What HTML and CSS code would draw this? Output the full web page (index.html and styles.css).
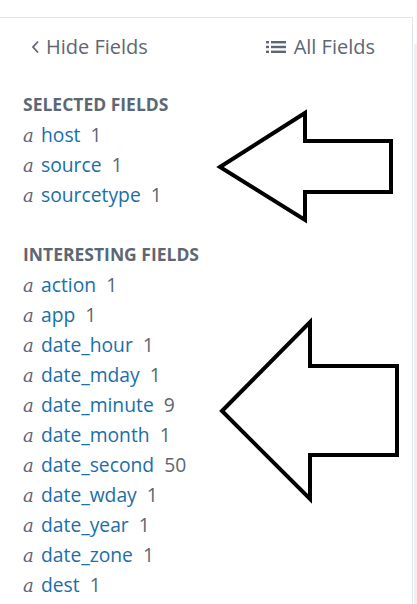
FILE: index.html
```html
<!DOCTYPE html>
<html>
<head>
<meta charset="utf-8">
<link rel="stylesheet" href="styles.css">
</head>
<body>
<div class="page">
  <div class="panel">
    <div class="toolbar">
      <span class="hide"><svg class="chev" width="9" height="14" viewBox="0 0 9 14"><path d="M7 1.5 L2 7 L7 12.5" fill="none" stroke="#5c6773" stroke-width="1.8"/></svg>Hide Fields</span>
      <span class="all"><svg class="list" width="20" height="14" viewBox="0 0 20 14"><rect x="0" y="1" width="3" height="2.4" fill="#5c6773"/><rect x="5" y="1" width="15" height="2.4" fill="#5c6773"/><rect x="0" y="5.8" width="3" height="2.4" fill="#5c6773"/><rect x="5" y="5.8" width="15" height="2.4" fill="#5c6773"/><rect x="0" y="10.6" width="3" height="2.4" fill="#5c6773"/><rect x="5" y="10.6" width="15" height="2.4" fill="#5c6773"/></svg>All Fields</span>
    </div>
    <div class="section">
      <div class="section-title">SELECTED FIELDS</div>
      <ul class="fields">
        <li><i class="type">a</i><span class="name">host</span><span class="count">1</span></li>
        <li><i class="type">a</i><span class="name">source</span><span class="count">1</span></li>
        <li><i class="type">a</i><span class="name">sourcetype</span><span class="count">1</span></li>
      </ul>
    </div>
    <div class="section second">
      <div class="section-title">INTERESTING FIELDS</div>
      <ul class="fields">
        <li><i class="type">a</i><span class="name">action</span><span class="count">1</span></li>
        <li><i class="type">a</i><span class="name">app</span><span class="count">1</span></li>
        <li><i class="type">a</i><span class="name">date_hour</span><span class="count">1</span></li>
        <li><i class="type">a</i><span class="name">date_mday</span><span class="count">1</span></li>
        <li><i class="type">a</i><span class="name">date_minute</span><span class="count">9</span></li>
        <li><i class="type">a</i><span class="name">date_month</span><span class="count">1</span></li>
        <li><i class="type">a</i><span class="name">date_second</span><span class="count">50</span></li>
        <li><i class="type">a</i><span class="name">date_wday</span><span class="count">1</span></li>
        <li><i class="type">a</i><span class="name">date_year</span><span class="count">1</span></li>
        <li><i class="type">a</i><span class="name">date_zone</span><span class="count">1</span></li>
        <li><i class="type">a</i><span class="name">dest</span><span class="count">1</span></li>
      </ul>
    </div>
  </div>
  <div class="scroll"></div>
</div>
<svg class="annot" width="417" height="604" viewBox="0 0 417 604">
  <polygon points="220,167 305,113 305,141 391,141 391,192 305,192 305,220" fill="none" stroke="#000" stroke-width="4" stroke-linejoin="miter"/>
  <polygon points="222,411 310,322 310,366 397,366 397,455 310,455 310,499" fill="none" stroke="#000" stroke-width="4" stroke-linejoin="miter"/>
</svg>
</body>
</html>
```
FILE: styles.css
```css
html, body {
  margin: 0;
  padding: 0;
  background: #ffffff;
  width: 417px;
  height: 604px;
  overflow: hidden;
}
body {
  font-family: "Open Sans", "Liberation Sans", sans-serif;
  color: #5c6773;
  position: relative;
}
.page {
  display: flex;
  padding-top: 17px;
  height: 587px;
}
.panel {
  width: 412px;
  border-top: 1px solid #e1e6eb;
  border-right: 1px solid #e1e6eb;
}
.scroll {
  width: 3px;
  margin-left: 1px;
  margin-top: 27px;
  background: #eef1f4;
}
.toolbar {
  display: flex;
  justify-content: space-between;
  align-items: center;
  height: 24px;
  margin-top: 17px;
  padding: 0 37px 0 31px;
  font-size: 20px;
  line-height: 24px;
}
.hide, .all {
  display: flex;
  align-items: center;
}
.chev {
  margin-right: 6px;
}
.list {
  margin-right: 8px;
}
.section {
  margin-top: 35px;
  padding-left: 23px;
}
.section.second {
  margin-top: 35px;
}
.section-title {
  font-size: 17.5px;
  font-weight: 700;
  line-height: 20px;
  margin-bottom: 5px;
  color: #5c6773;
}
.fields {
  list-style: none;
  margin: 0;
  padding: 0;
}
.fields li {
  display: flex;
  align-items: baseline;
  height: 30px;
  line-height: 31px;
  font-size: 19.3px;
}
.type {
  font-family: "DejaVu Serif", "Liberation Serif", serif;
  font-style: italic;
  color: #5c6773;
  width: 18px;
  font-size: 18px;
}
.name {
  color: #1a6ea9;
  margin-right: 10px;
}
.count {
  color: #5c6773;
}
.annot {
  position: absolute;
  left: 0;
  top: 0;
  pointer-events: none;
}
```
